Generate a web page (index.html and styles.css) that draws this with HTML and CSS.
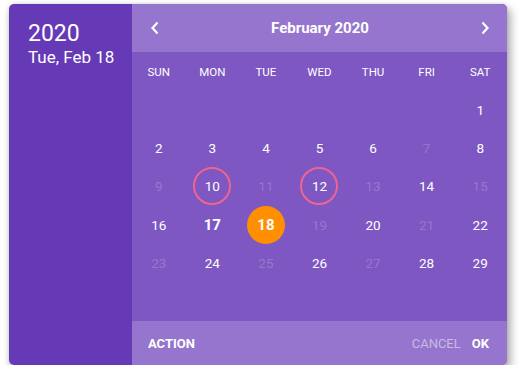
FILE: index.html
```html
<!DOCTYPE html>
<html>
<head>
<meta charset="utf-8">
<link rel="stylesheet" href="styles.css">
</head>
<body>
<div class="card">
  <div class="side">
    <div class="year">2020</div>
    <div class="date">Tue, Feb 18</div>
  </div>
  <div class="main">
    <div class="head">
      <button class="nav"><svg width="10" height="14" viewBox="0 0 10 14"><path d="M7.5 1.5 L2.5 7 L7.5 12.5" fill="none" stroke="#fff" stroke-width="2.2"/></svg></button>
      <div class="month">February 2020</div>
      <button class="nav"><svg width="10" height="14" viewBox="0 0 10 14"><path d="M2.5 1.5 L7.5 7 L2.5 12.5" fill="none" stroke="#fff" stroke-width="2.2"/></svg></button>
    </div>
    <div class="grid">
      <div class="wd">SUN</div><div class="wd">MON</div><div class="wd">TUE</div><div class="wd">WED</div><div class="wd">THU</div><div class="wd">FRI</div><div class="wd">SAT</div>
      <div class="d"></div><div class="d"></div><div class="d"></div><div class="d"></div><div class="d"></div><div class="d"></div><div class="d"><span>1</span></div>
      <div class="d"><span>2</span></div><div class="d"><span>3</span></div><div class="d"><span>4</span></div><div class="d"><span>5</span></div><div class="d"><span>6</span></div><div class="d off"><span>7</span></div><div class="d"><span>8</span></div>
      <div class="d off"><span>9</span></div><div class="d"><span class="ring">10</span></div><div class="d off"><span>11</span></div><div class="d"><span class="ring">12</span></div><div class="d off"><span>13</span></div><div class="d"><span>14</span></div><div class="d off"><span>15</span></div>
      <div class="d"><span>16</span></div><div class="d"><span class="today">17</span></div><div class="d"><span class="sel">18</span></div><div class="d off"><span>19</span></div><div class="d"><span>20</span></div><div class="d off"><span>21</span></div><div class="d"><span>22</span></div>
      <div class="d off"><span>23</span></div><div class="d"><span>24</span></div><div class="d off"><span>25</span></div><div class="d"><span>26</span></div><div class="d off"><span>27</span></div><div class="d"><span>28</span></div><div class="d"><span>29</span></div>
    </div>
    <div class="foot">
      <button class="btn">ACTION</button>
      <div class="spacer"></div>
      <button class="btn cancel">CANCEL</button>
      <button class="btn">OK</button>
    </div>
  </div>
</div>
</body>
</html>
```
FILE: styles.css
```css
* { box-sizing: border-box; }
html, body { margin: 0; padding: 0; background: #fff; }
body { font-family: Roboto, "Liberation Sans", sans-serif; color: #fff; padding: 4px 0 0 9px; }
.card {
  width: 498px;
  height: 361px;
  display: flex;
  border-radius: 5px;
  overflow: hidden;
  box-shadow: 3px 5px 9px 1px rgba(0,0,0,0.3), 0 0 4px rgba(0,0,0,0.12);
}
.side {
  width: 123px;
  background: #6639b6;
  padding: 16px 0 0 19px;
}
.year { font-size: 23px; line-height: 27px; }
.date { font-size: 17px; line-height: 20px; }
.main { flex: 1; display: flex; flex-direction: column; background: #7e57c2; }
.head {
  height: 48px;
  background: #9575cd;
  display: flex;
  align-items: center;
  justify-content: space-between;
  padding: 0 16px 0 17px;
}
.nav { background: none; border: 0; padding: 0; width: 12px; height: 16px; display: flex; align-items: center; justify-content: center; }
.month { font-size: 15px; font-weight: 700; }
.grid {
  height: 269px;
  display: grid;
  grid-template-columns: repeat(7, 1fr);
  grid-template-rows: repeat(7, 1fr);
}
.wd { font-size: 11.5px; display: flex; align-items: center; justify-content: center; padding-top: 1px; }
.d { display: flex; align-items: center; justify-content: center; font-size: 13.5px; }
.d span { width: 38px; height: 38px; border-radius: 50%; display: flex; align-items: center; justify-content: center; }
.d.off span { color: rgba(255,255,255,0.2); }
.ring { border: 2px solid #f2648f; }
.today { font-weight: 700; font-size: 15px; }
.sel { background: #ff8f00; font-weight: 700; font-size: 15px; }
.foot {
  height: 44px;
  background: #9575cd;
  display: flex;
  align-items: center;
  padding: 0 18px 0 16px;
}
.btn { background: none; border: 0; padding: 0; color: #fff; font-family: inherit; font-size: 13px; font-weight: 700; }
.spacer { flex: 1; }
.cancel { color: rgba(255,255,255,0.5); font-weight: 400; margin-right: 11px; }
```
